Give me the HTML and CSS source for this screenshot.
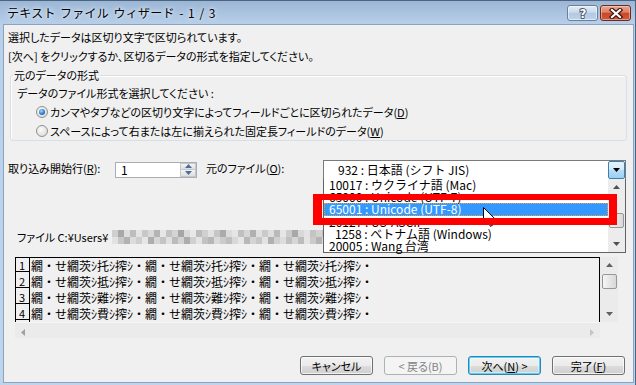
FILE: index.html
```html
<!DOCTYPE html>
<html lang="ja">
<head>
<meta charset="utf-8">
<title>テキスト ファイル ウィザード</title>
<link rel="stylesheet" href="styles.css">
</head>
<body>
<div class="win">
  <div class="titlebar">
    <div class="title">テキスト ファイル ウィザード - 1 / 3</div>
    <div class="capbtns">
      <div class="cbtn help"><svg width="12" height="14" viewBox="0 0 12 14"><text x="6" y="12" text-anchor="middle" class="qmark">?</text></svg></div>
      <div class="cbtn close"><svg width="14" height="11" viewBox="0 0 14 11"><path d="M3 2 L11 9 M11 2 L3 9" class="xo"/><path d="M3 2 L11 9 M11 2 L3 9" class="xi"/></svg></div>
    </div>
  </div>
  <div class="client">
    <p class="msg">選択したデータは区切り文字で区切られています。</p>
    <p class="msg">[次へ] をクリックするか、区切るデータの形式を指定してください。</p>
    <fieldset class="group">
      <legend>元のデータの形式</legend>
      <div class="prompt">データのファイル形式を選択してください :</div>
      <div class="radio"><span class="rb on"></span><span>カンマやタブなどの区切り文字によってフィールドごとに区切られたデータ(<u>D</u>)</span></div>
      <div class="radio"><span class="rb"></span><span>スペースによって右または左に揃えられた固定長フィールドのデータ(<u>W</u>)</span></div>
    </fieldset>
    <div class="startrow">
      <span class="lbl lbl1">取り込み開始行(<u>R</u>):</span>
      <div class="spin">
        <span class="val">1</span>
        <div class="spinbtns">
          <div class="sb"><svg width="7" height="4" viewBox="0 0 7 4"><path d="M0 4 L3.5 0 L7 4 Z" fill="#4a6d99"/></svg></div>
          <div class="sb"><svg width="7" height="4" viewBox="0 0 7 4"><path d="M0 0 L3.5 4 L7 0 Z" fill="#4a6d99"/></svg></div>
        </div>
      </div>
      <span class="lbl lbl2">元のファイル(<u>O</u>):</span>
      <div class="combo">
        <span class="ctext">932 : 日本語 (シフト JIS)</span>
        <div class="dropbtn"><svg width="7" height="4" viewBox="0 0 7 4"><path d="M0 0 H7 L3.5 4 Z" fill="#000"/></svg></div>
      </div>
    </div>
    <div class="fileline">ファイル C:¥Users¥<svg class="blur" width="216" height="14" viewBox="0 0 216 14">
      <rect x="0" y="0" width="6" height="7" fill="#cfcfcf"/><rect x="6" y="0" width="6" height="7" fill="#a9a9a9"/><rect x="12" y="0" width="6" height="7" fill="#dedede"/><rect x="18" y="0" width="6" height="7" fill="#bdbdbd"/><rect x="24" y="0" width="6" height="7" fill="#e4e4e4"/><rect x="30" y="0" width="6" height="7" fill="#c8c8c8"/><rect x="36" y="0" width="6" height="7" fill="#d9d9d9"/><rect x="42" y="0" width="6" height="7" fill="#b4b4b4"/><rect x="48" y="0" width="6" height="7" fill="#e6e6e6"/><rect x="54" y="0" width="6" height="7" fill="#c2c2c2"/><rect x="60" y="0" width="6" height="7" fill="#d4d4d4"/><rect x="66" y="0" width="6" height="7" fill="#a6a6a6"/><rect x="72" y="0" width="6" height="7" fill="#dadada"/><rect x="78" y="0" width="6" height="7" fill="#e8e8e8"/><rect x="84" y="0" width="6" height="7" fill="#bcbcbc"/><rect x="90" y="0" width="6" height="7" fill="#d0d0d0"/><rect x="96" y="0" width="6" height="7" fill="#e2e2e2"/><rect x="102" y="0" width="6" height="7" fill="#c6c6c6"/><rect x="108" y="0" width="6" height="7" fill="#ababab"/><rect x="114" y="0" width="6" height="7" fill="#dcdcdc"/><rect x="120" y="0" width="6" height="7" fill="#e5e5e5"/><rect x="126" y="0" width="6" height="7" fill="#c0c0c0"/><rect x="132" y="0" width="6" height="7" fill="#d6d6d6"/><rect x="138" y="0" width="6" height="7" fill="#b0b0b0"/><rect x="144" y="0" width="6" height="7" fill="#e0e0e0"/><rect x="150" y="0" width="6" height="7" fill="#cacaca"/><rect x="156" y="0" width="6" height="7" fill="#dedede"/><rect x="162" y="0" width="6" height="7" fill="#bababa"/><rect x="168" y="0" width="6" height="7" fill="#e6e6e6"/><rect x="174" y="0" width="6" height="7" fill="#cccccc"/><rect x="180" y="0" width="6" height="7" fill="#a8a8a8"/><rect x="186" y="0" width="6" height="7" fill="#d8d8d8"/><rect x="192" y="0" width="6" height="7" fill="#e3e3e3"/><rect x="198" y="0" width="6" height="7" fill="#c4c4c4"/><rect x="204" y="0" width="6" height="7" fill="#d2d2d2"/><rect x="210" y="0" width="6" height="7" fill="#bebebe"/>
      <rect x="0" y="7" width="6" height="7" fill="#e2e2e2"/><rect x="6" y="7" width="6" height="7" fill="#c8c8c8"/><rect x="12" y="7" width="6" height="7" fill="#b2b2b2"/><rect x="18" y="7" width="6" height="7" fill="#dcdcdc"/><rect x="24" y="7" width="6" height="7" fill="#cecece"/><rect x="30" y="7" width="6" height="7" fill="#e6e6e6"/><rect x="36" y="7" width="6" height="7" fill="#aeaeae"/><rect x="42" y="7" width="6" height="7" fill="#d6d6d6"/><rect x="48" y="7" width="6" height="7" fill="#c4c4c4"/><rect x="54" y="7" width="6" height="7" fill="#e0e0e0"/><rect x="60" y="7" width="6" height="7" fill="#bbbbbb"/><rect x="66" y="7" width="6" height="7" fill="#d2d2d2"/><rect x="72" y="7" width="6" height="7" fill="#acacac"/><rect x="78" y="7" width="6" height="7" fill="#d0d0d0"/><rect x="84" y="7" width="6" height="7" fill="#e4e4e4"/><rect x="90" y="7" width="6" height="7" fill="#c2c2c2"/><rect x="96" y="7" width="6" height="7" fill="#b6b6b6"/><rect x="102" y="7" width="6" height="7" fill="#dadada"/><rect x="108" y="7" width="6" height="7" fill="#cbcbcb"/><rect x="114" y="7" width="6" height="7" fill="#bfbfbf"/><rect x="120" y="7" width="6" height="7" fill="#d8d8d8"/><rect x="126" y="7" width="6" height="7" fill="#e6e6e6"/><rect x="132" y="7" width="6" height="7" fill="#b8b8b8"/><rect x="138" y="7" width="6" height="7" fill="#d4d4d4"/><rect x="144" y="7" width="6" height="7" fill="#c6c6c6"/><rect x="150" y="7" width="6" height="7" fill="#e2e2e2"/><rect x="156" y="7" width="6" height="7" fill="#b0b0b0"/><rect x="162" y="7" width="6" height="7" fill="#d0d0d0"/><rect x="168" y="7" width="6" height="7" fill="#dddddd"/><rect x="174" y="7" width="6" height="7" fill="#c0c0c0"/><rect x="180" y="7" width="6" height="7" fill="#d6d6d6"/><rect x="186" y="7" width="6" height="7" fill="#bcbcbc"/><rect x="192" y="7" width="6" height="7" fill="#e4e4e4"/><rect x="198" y="7" width="6" height="7" fill="#cacaca"/><rect x="204" y="7" width="6" height="7" fill="#b4b4b4"/><rect x="210" y="7" width="6" height="7" fill="#dcdcdc"/>
    </svg></div>
    <div class="preview">
      <div class="pbox">
        <div class="prow"><span class="pnum">1</span><span class="ptext">繝・せ繝茨ｼ托ｼ搾ｼ・繝・せ繝茨ｼ托ｼ搾ｼ・繝・せ繝茨ｼ托ｼ搾ｼ・</span></div>
        <div class="prow"><span class="pnum">2</span><span class="ptext">繝・せ繝茨ｼ抵ｼ搾ｼ・繝・せ繝茨ｼ抵ｼ搾ｼ・繝・せ繝茨ｼ抵ｼ搾ｼ・</span></div>
        <div class="prow"><span class="pnum">3</span><span class="ptext">繝・せ繝茨ｼ難ｼ搾ｼ・繝・せ繝茨ｼ難ｼ搾ｼ・繝・せ繝茨ｼ難ｼ搾ｼ・</span></div>
        <div class="prow"><span class="pnum">4</span><span class="ptext">繝・せ繝茨ｼ費ｼ搾ｼ・繝・せ繝茨ｼ費ｼ搾ｼ・繝・せ繝茨ｼ費ｼ搾ｼ・</span></div>
      </div>
      <div class="vscroll">
        <div class="arrow"><svg width="7" height="4" viewBox="0 0 7 4"><path d="M0 4 L3.5 0 L7 4 Z" fill="#606060"/></svg></div>
        <div class="thumb"></div>
        <div class="track"></div>
        <div class="arrow"><svg width="7" height="4" viewBox="0 0 7 4"><path d="M0 0 L3.5 4 L7 0 Z" fill="#606060"/></svg></div>
      </div>
      <div class="hscroll">
        <div class="harrow"><svg width="4" height="7" viewBox="0 0 4 7"><path d="M4 0 L0 3.5 L4 7 Z" fill="#a0a0a0"/></svg></div>
        <div class="harrow"><svg width="4" height="7" viewBox="0 0 4 7"><path d="M0 0 L4 3.5 L0 7 Z" fill="#c4c4c4"/></svg></div>
      </div>
      <div class="corner"></div>
    </div>
    <div class="buttons">
      <div class="btn">キャンセル</div>
      <div class="btn disabled">&lt; 戻る(B)</div>
      <div class="btn default">次へ(<u>N</u>) &gt;</div>
      <div class="btn">完了(<u>F</u>)</div>
    </div>
  </div>

  <div class="droplist">
    <div class="items">
      <div class="item">10017 : ウクライナ語 (Mac)</div>
      <div class="item">65000 : Unicode (UTF-7)</div>
      <div class="item sel">65001 : Unicode (UTF-8)</div>
      <div class="item">20127 : US-ASCII</div>
      <div class="item ind">1258 : ベトナム語 (Windows)</div>
      <div class="item">20005 : Wang 台湾</div>
    </div>
    <div class="lscroll">
      <div class="arrow"><svg width="7" height="4" viewBox="0 0 7 4"><path d="M0 4 L3.5 0 L7 4 Z" fill="#505050"/></svg></div>
      <div class="ltrack1"></div>
      <div class="thumb"></div>
      <div class="ltrack2"></div>
      <div class="arrow"><svg width="7" height="4" viewBox="0 0 7 4"><path d="M0 0 L3.5 4 L7 0 Z" fill="#505050"/></svg></div>
    </div>
  </div>
  <svg class="cursor" width="13" height="21" viewBox="0 0 13 21"><path d="M0.5 0.5 V16.5 L4.5 12.7 L7.3 19.3 L9.6 18.3 L6.9 11.9 H12 Z" fill="#fff" stroke="#000" stroke-width="1"/></svg>
  <div class="redbox"></div>
</div>
</body>
</html>
```

FILE: styles.css
```css
* { box-sizing: border-box; }
html, body { margin: 0; padding: 0; }
body {
  width: 636px;
  height: 385px;
  overflow: hidden;
  font-family: "Noto Sans CJK JP", "Noto Sans", sans-serif;
  font-size: 12px;
  color: #000;
  background: #fff;
}
u { text-decoration: underline; text-underline-offset: 1px; }

.win {
  position: relative;
  width: 636px;
  height: 385px;
  display: flex;
  flex-direction: column;
  background: linear-gradient(#9ab5d4 0, #b9d0ea 25px, #bfd5ec 100%);
  box-shadow: inset 0 1px #4d6480, inset -1px 0 #4d6480;
}

.titlebar {
  height: 25px;
  flex: none;
  display: flex;
  align-items: flex-start;
  padding-left: 7px;
}
.title {
  margin-top: 5px;
  line-height: 16px;
  font-size: 12px;
  letter-spacing: 0.25px;
  word-spacing: 1.5px;
  color: #000;
  text-shadow: 0 0 6px #e8f0fa, 0 0 3px #e8f0fa;
}
.capbtns {
  margin-left: auto;
  margin-top: 5px;
  margin-right: 5px;
  display: flex;
  gap: 2px;
}
.cbtn {
  width: 31px;
  height: 16px;
  border-radius: 3px;
  display: flex;
  align-items: center;
  justify-content: center;
}
.help {
  border: 1px solid #6c7f98;
  background: linear-gradient(#e3ecf7 0, #c9daee 45%, #b2c9e4 50%, #bcd2ec 100%);
  box-shadow: inset 0 0 0 1px rgba(255,255,255,0.55);
}
.close {
  border: 1px solid #6e2a1f;
  background: linear-gradient(#eaa692 0, #dc8064 45%, #c9472b 50%, #cf5b3c 100%);
  box-shadow: inset 0 0 0 1px rgba(255,220,210,0.5);
}
.qmark {
  font-family: "DejaVu Sans", sans-serif;
  font-weight: bold;
  font-size: 12px;
  fill: #fff;
  stroke: #2f3e52;
  stroke-width: 1.6px;
  paint-order: stroke;
}
.xo { stroke: #3a1610; stroke-width: 4.4; stroke-linecap: square; fill: none; }
.xi { stroke: #fff; stroke-width: 2.2; stroke-linecap: square; fill: none; }

.client {
  flex: 1;
  margin: 0 3px 3px 4px;
  background: #f0f0f0;
  padding: 3px 0 0 4px;
  box-shadow: 0 0 0 1px #8aa3c0;
  font-size: 11px;
  font-feature-settings: "palt";
}
.msg { margin: 0; line-height: 19px; }

.group {
  margin: 2px 6px 0 2px;
  padding: 0 0 0 2px;
  border: 1px solid #d5dfe5;
  border-radius: 3px;
  box-shadow: inset 1px 1px #fff;
  min-width: 0;
}
.group legend { padding: 0 1px; line-height: 14px; }
.prompt { padding-top: 3px; line-height: 17px; margin-left: 4px; }
.radio {
  height: 19px;
  display: flex;
  align-items: center;
  padding-left: 23px;
  gap: 2px;
}
.rb {
  width: 12px;
  height: 12px;
  border-radius: 50%;
  border: 1px solid #8f8f8f;
  background: radial-gradient(circle at 40% 35%, #fbfbfb 0, #dcdcdc 80%);
  display: flex;
  align-items: center;
  justify-content: center;
  flex: none;
}
.rb.on::after {
  content: "";
  width: 6px;
  height: 6px;
  border-radius: 50%;
  background: radial-gradient(circle at 40% 35%, #9fdcff 0, #2a7bd0 55%, #0d4a9a 100%);
}

.startrow {
  margin-top: 18px;
  height: 21px;
  display: flex;
  align-items: center;
}
.lbl { padding-bottom: 3px; white-space: nowrap; }
.lbl1 { width: 107px; }
.lbl2 { width: 117px; margin-left: 9px; }
.spin {
  width: 82px;
  height: 16px;
  border: 1px solid #abadb3;
  background: #fff;
  display: flex;
  font-size: 12px;
}
.val { flex: 1; padding-left: 5px; line-height: 14px; }
.spinbtns {
  width: 16px;
  display: flex;
  flex-direction: column;
}
.sb {
  flex: 1;
  display: flex;
  align-items: center;
  justify-content: center;
  background: linear-gradient(#f4f4f4, #dedede);
  border: 1px solid #c4c8cc;
}
.sb + .sb { border-top: none; }
.combo {
  width: 303px;
  height: 20px;
  border: 1px solid #7a7a7a;
  background: #fff;
  display: flex;
  align-items: center;
  font-size: 12px;
  font-feature-settings: normal;
}
.ctext { flex: 1; padding-left: 14px; line-height: 16px; }
.dropbtn {
  width: 17px;
  height: 18px;
  border: 1px solid #3c7fb1;
  border-radius: 2px;
  background: linear-gradient(#e4f3fc 0, #d3ecfb 45%, #b5ddf8 50%, #9ccff2 100%);
  display: flex;
  align-items: center;
  justify-content: center;
}

.fileline {
  margin-top: 49px;
  padding-left: 9px;
  line-height: 16px;
  height: 16px;
  display: flex;
  align-items: center;
  white-space: nowrap;
}
.blur { margin-left: 4px; flex: none; }

.preview {
  margin-top: 12px;
  margin-left: 7px;
  display: grid;
  grid-template-columns: 585px 18px;
  grid-template-rows: 65px 16px;
}
.pbox {
  border: 1px solid #000;
  border-bottom: none;
  overflow: hidden;
  background: #f0f0f0;
  font-size: 12px;
  font-feature-settings: normal;
}
.prow { display: flex; height: 16px; }
.pnum {
  width: 13px;
  height: 14px;
  border-bottom: 1px solid #000;
  font-size: 11px;
  line-height: 14px;
  padding-left: 3px;
  flex: none;
}
.ptext {
  border-left: 1px solid #000;
  padding-left: 1px;
  line-height: 16px;
  white-space: nowrap;
}
.vscroll {
  display: flex;
  flex-direction: column;
  align-items: center;
  background: #ebebeb;
  padding: 0 1px;
}
.vscroll .arrow, .lscroll .arrow {
  height: 16px;
  width: 100%;
  display: flex;
  align-items: center;
  justify-content: center;
  flex: none;
}
.thumb {
  width: 15px;
  height: 15px;
  border: 1px solid #979797;
  border-radius: 2px;
  background: linear-gradient(90deg, #f6f6f6, #e6e6e6 50%, #d8d8d8);
  flex: none;
}
.vscroll .thumb { margin-top: 1px; }
.track { flex: 1; }
.hscroll {
  background: #ebebeb;
  border-top: 1px solid #f6f6f6;
  display: flex;
  justify-content: space-between;
  align-items: center;
  padding: 0 6px;
}
.corner { background: #f0f0f0; }

.buttons {
  margin-top: 18px;
  display: flex;
  justify-content: flex-end;
  gap: 11px;
  padding-right: 8px;
}
.btn {
  width: 73px;
  height: 19px;
  border: 1px solid #707070;
  border-radius: 3px;
  background: linear-gradient(#f2f2f2 0, #ebebeb 50%, #dddddd 50%, #cfcfcf 100%);
  box-shadow: inset 0 0 0 1px rgba(255,255,255,0.7);
  display: flex;
  align-items: center;
  justify-content: center;
  line-height: 16px;
}
.btn.disabled {
  border-color: #adb2b5;
  background: #f4f4f4;
  color: #838383;
  box-shadow: none;
}
.btn.default {
  border-color: #3c7fb1;
  box-shadow: inset 0 0 0 1px #48d8fb, inset 0 0 0 2px rgba(255,255,255,0.4);
}

.droplist {
  position: absolute;
  left: 323px;
  top: 179px;
  width: 303px;
  height: 74px;
  background: #fff;
  border: 1px solid #646464;
  border-top: none;
  display: flex;
}
.items { flex: 1; }
.item {
  height: 12.2px;
  line-height: 12.2px;
  padding-left: 5px;
  white-space: nowrap;
}
.item.ind { padding-left: 11px; }
.item.sel {
  background: #3399ff;
  color: #fff;
  outline: 1px dotted #e8a040;
  outline-offset: -1px;
}
.lscroll {
  width: 17px;
  display: flex;
  flex-direction: column;
  align-items: center;
  background: #ececec;
  padding: 0 1px;
}
.ltrack1 { flex: 2.4; }
.ltrack2 { flex: 1; }

.cursor {
  position: absolute;
  left: 483px;
  top: 207px;
}
.redbox {
  position: absolute;
  left: 313px;
  top: 194px;
  width: 304px;
  height: 31px;
  border-style: solid;
  border-color: #ff0000;
  border-width: 6px 8px 7px 9px;
}
```
